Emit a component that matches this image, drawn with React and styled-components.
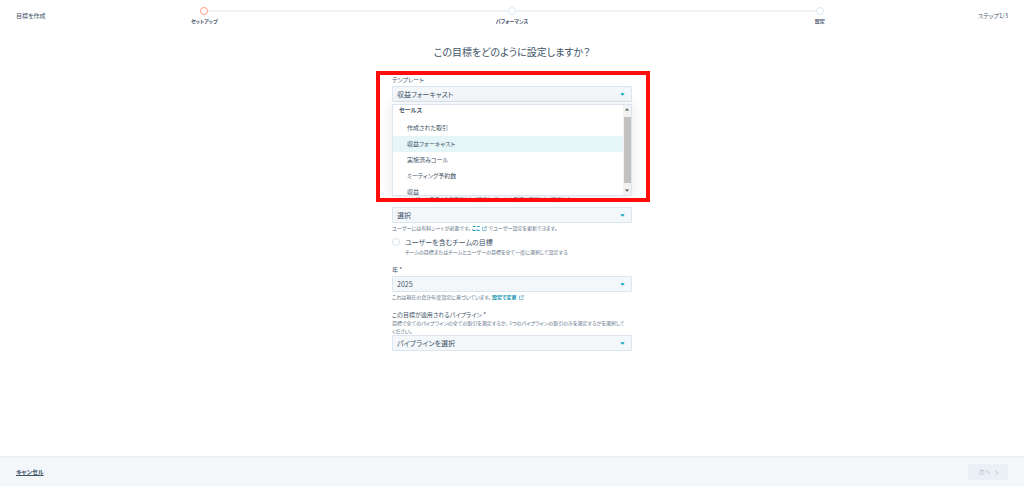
import React from 'react';
import styled, { createGlobalStyle } from 'styled-components';

const GlobalStyle = createGlobalStyle`
  *, *::before, *::after { box-sizing: border-box; }
  body {
    margin: 0;
    background: #fff;
    color: #425467;
    font-family: "Noto Sans CJK JP", "Noto Sans", sans-serif;
    font-feature-settings: "palt";
    font-size: 7px;
    line-height: 10px;
  }
`;

const Page = styled.div`
  min-height: 100vh;
  display: flex;
  flex-direction: column;
`;

const Header = styled.header`
  display: grid;
  grid-template-columns: 18% 64% 18%;
  padding-top: 7px;
  font-size: 6px;
`;

const HeaderText = styled.div`
  padding: 4px 16px 0;
  text-align: ${(p) => p.$align || 'left'};
`;

const Steps = styled.ol`
  list-style: none;
  margin: 0;
  padding: 0;
  display: flex;
  justify-content: space-between;
  background: linear-gradient(#eff3f8, #eff3f8) center 3px / calc(100% - 40px) 2px no-repeat;
`;

const Step = styled.li`
  width: 40px;
  display: flex;
  flex-direction: column;
  align-items: center;
  gap: 3px;
  font-size: 5px;
  line-height: 6px;
  font-weight: 700;
  white-space: nowrap;

  &::before {
    content: '';
    width: 8px;
    height: 8px;
    border-radius: 50%;
    background: #fff;
    border: 1px solid ${(p) => (p.$active ? '#ff9e86' : '#dfe7f0')};
  }
`;

const Main = styled.main`
  flex: 1;
  width: 240px;
  margin: 0 auto;
  padding-top: 20px;
`;

const Title = styled.h1`
  margin: 0 0 16px;
  font-size: 10px;
  line-height: 16px;
  font-weight: 400;
  text-align: center;
  white-space: nowrap;
`;

const Field = styled.div`
  position: relative;
  margin-bottom: ${(p) => p.$gap || 0}px;
`;

const Label = styled.label`
  display: block;
  font-size: 6px;
  line-height: 8px;
  margin-bottom: ${(p) => p.$gap || 0}px;
`;

const SelectWrap = styled.div`
  position: relative;
  & > svg {
    position: absolute;
    right: 7px;
    top: 7px;
    pointer-events: none;
  }
`;

const Select = styled.select`
  appearance: none;
  display: block;
  width: 100%;
  height: 16px;
  padding: 0 4px;
  border: 1px solid #dde6ef;
  border-radius: 1px;
  background: #f3f7fa;
  color: #425467;
  font: inherit;
  font-feature-settings: inherit;
`;

const Hint = styled.p`
  margin: ${(p) => p.$top || 0}px 0 ${(p) => p.$bottom || 0}px;
  padding-left: ${(p) => (p.$indent ? 13 : 0)}px;
  font-size: 5px;
  line-height: 8px;
  color: #5b6f84;
`;

const KeepTogether = styled.span`
  display: inline-block;
`;

const Link = styled.a`
  color: #0091ae;
  font-weight: 700;
  text-decoration: none;
  & > svg { margin-left: 2px; vertical-align: -1px; }
`;

const Menu = styled.div`
  position: absolute;
  z-index: 1;
  top: 100%;
  left: 0;
  right: 0;
  height: 92px;
  margin-top: 2px;
  display: flex;
  overflow: hidden;
  background: #fff;
  border: 1px solid #dde6ef;
  box-shadow: 0 1px 12px rgba(45, 62, 80, 0.12);
`;

const Options = styled.ul`
  flex: 1;
  list-style: none;
  margin: 0;
  padding: 0;
  font-size: 6px;
  line-height: 16px;
`;

const Group = styled.li`
  height: 15px;
  padding-left: 6px;
  line-height: 9px;
  font-weight: 700;
`;

const Option = styled.li`
  padding-left: 14px;
  background: ${(p) => (p.$selected ? '#e5f5f8' : 'transparent')};
`;

const Scrollbar = styled.div`
  width: 8px;
  display: flex;
  flex-direction: column;
  align-items: center;
  justify-content: space-between;
  padding: 3px 0;
  background: #f1f1f1;
`;

const Thumb = styled.div`
  width: 7px;
  height: 66px;
  background: #c1c1c1;
`;

const Highlight = styled.div`
  position: absolute;
  z-index: 2;
  top: -5px;
  left: -16px;
  right: -18px;
  height: 131px;
  border: 4px solid #ff0d0d;
  pointer-events: none;
`;

const RadioRow = styled.label`
  display: flex;
  align-items: center;
  gap: 5px;
  line-height: 12px;
`;

const Radio = styled.input`
  appearance: none;
  width: 8px;
  height: 8px;
  margin: 0;
  border: 1px solid #d8e1eb;
  border-radius: 50%;
  background: #fff;
`;

const Footer = styled.footer`
  display: flex;
  align-items: center;
  justify-content: space-between;
  height: 30px;
  padding: 0 16px;
  background: #f3f7fa;
  border-top: 2px solid #eaf0f5;
`;

const Cancel = styled.a`
  font-size: 6px;
  font-weight: 700;
  color: #425467;
  text-decoration: underline;
`;

const Next = styled.button`
  display: flex;
  align-items: center;
  justify-content: center;
  gap: 4px;
  width: 40px;
  height: 16px;
  padding: 0;
  border: 0;
  border-radius: 1px;
  background: #eaf0f6;
  color: #b0c1d4;
  font: inherit;
  font-size: 6px;
`;

const Caret = () => (
  <svg width="5" height="3" viewBox="0 0 5 3" aria-hidden="true">
    <path d="M0.3 0.2h4.4L2.5 2.8z" fill="#00a4bd" />
  </svg>
);

const Arrow = ({ up }) => (
  <svg width="4" height="3" viewBox="0 0 4 3" aria-hidden="true">
    <path d={up ? 'M0 2.5h4L2 0.3z' : 'M0 0.5h4L2 2.7z'} fill="#505050" />
  </svg>
);

const External = () => (
  <svg width="5" height="5" viewBox="0 0 10 10" fill="none" stroke="#4d9fb3" strokeWidth="1.2" aria-hidden="true">
    <path d="M4.5 2H1v7h7V5.5M6 1h3v3M9 1L4 6" />
  </svg>
);

const Chevron = () => (
  <svg width="3" height="5" viewBox="0 0 3 5" fill="none" stroke="#b0c1d4" aria-hidden="true">
    <path d="M0.5 0.5l2 2-2 2" />
  </svg>
);

const Dropdown = ({ id, value, label }) => (
  <SelectWrap>
    <Select id={id} aria-label={label} defaultValue={value}>
      <option>{value}</option>
    </Select>
    <Caret />
  </SelectWrap>
);

const steps = ['セットアップ', 'パフォーマンス', '設定'];
const selected = '収益フォーキャスト';
const options = ['作成された取引', selected, '実施済みコール', 'ミーティング予約数', '収益'];

export default function App() {
  return (
    <Page lang="ja">
      <GlobalStyle />
      <Header>
        <HeaderText>目標を作成</HeaderText>
        <Steps>
          {steps.map((s, i) => (
            <Step key={s} $active={i === 0}>{s}</Step>
          ))}
        </Steps>
        <HeaderText $align="right">ステップ1/3</HeaderText>
      </Header>
      <Main>
        <Title>この目標をどのように設定しますか？</Title>
        <Field $gap={93}>
          <Label htmlFor="template" $gap={2}>テンプレート</Label>
          <Dropdown id="template" value={selected} />
          <Menu>
            <Options role="listbox" aria-label="テンプレート">
              <Group role="presentation">セールス</Group>
              {options.map((o) => (
                <Option key={o} role="option" aria-selected={o === selected} $selected={o === selected}>
                  {o}
                </Option>
              ))}
            </Options>
            <Scrollbar aria-hidden="true">
              <Arrow up />
              <Thumb />
              <Arrow />
            </Scrollbar>
          </Menu>
          <Highlight />
        </Field>
        <Field $gap={4}>
          <Hint $indent $bottom={4}>ユーザーの目標のみを選択および設定し、チームの目標は選択および設定しない</Hint>
          <Dropdown id="users" label="ユーザー" value="選択" />
          <Hint $top={1}>
            ユーザーには有料シートが必要です。 <Link href="#seats">ここ<External /></Link> でユーザー設定を更新できます。
          </Hint>
        </Field>
        <Field $gap={10}>
          <RadioRow>
            <Radio type="radio" name="scope" />
            ユーザーを含むチームの目標
          </RadioRow>
          <Hint $indent>チームの目標またはチームとユーザーの目標を全て一度に選択して設定する</Hint>
        </Field>
        <Field $gap={10}>
          <Label htmlFor="year" $gap={2}>年 *</Label>
          <Dropdown id="year" value="2025" />
          <Hint $top={1}>
            これは現在の会計年度設定に基づいています。 <Link href="#settings">設定で変更<External /></Link>
          </Hint>
        </Field>
        <Field>
          <Label htmlFor="pipeline">この目標が適用されるパイプライン *</Label>
          <Hint>
            目標で全てのパイプラインの全ての取引を測定するか、 1つのパイプラインの取引のみを測定するかを選択して
            <KeepTogether>ください。</KeepTogether>
          </Hint>
          <Dropdown id="pipeline" value="パイプラインを選択" />
        </Field>
      </Main>
      <Footer>
        <Cancel href="#cancel">キャンセル</Cancel>
        <Next type="button" disabled>次へ<Chevron /></Next>
      </Footer>
    </Page>
  );
}
